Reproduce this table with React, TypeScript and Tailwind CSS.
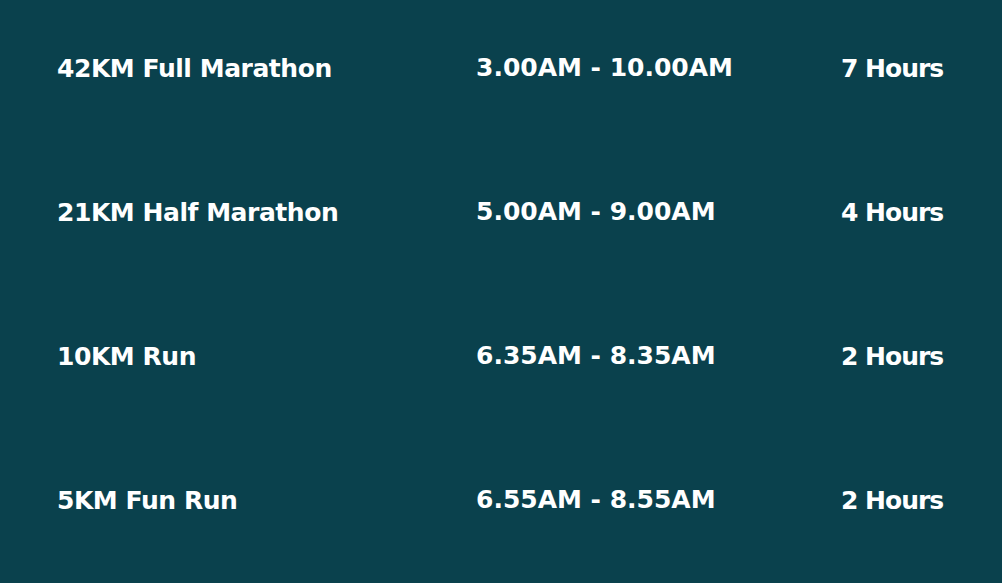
const rows = [
  { race: "42KM Full Marathon", time: "3.00AM - 10.00AM", hours: "7 Hours" },
  { race: "21KM Half Marathon", time: "5.00AM - 9.00AM", hours: "4 Hours" },
  { race: "10KM Run", time: "6.35AM - 8.35AM", hours: "2 Hours" },
  { race: "5KM Fun Run", time: "6.55AM - 8.55AM", hours: "2 Hours" },
];

export default function App() {
  return (
    <div
      className="min-h-screen bg-[#0a414d] text-white font-bold pl-[57px] pt-[54px] flex flex-col gap-[114px]"
      style={{ fontFamily: '"DejaVu Sans", sans-serif' }}
    >
      {rows.map((r, i) => (
        <div key={i} className="grid grid-cols-[419px_365px_1fr] text-[25px] leading-[30px]">
          <span className="tracking-[-0.45px]">{r.race}</span>
          <span className="-mt-[1px]">{r.time}</span>
          <span className="tracking-[-1px]">{r.hours}</span>
        </div>
      ))}
    </div>
  );
}
